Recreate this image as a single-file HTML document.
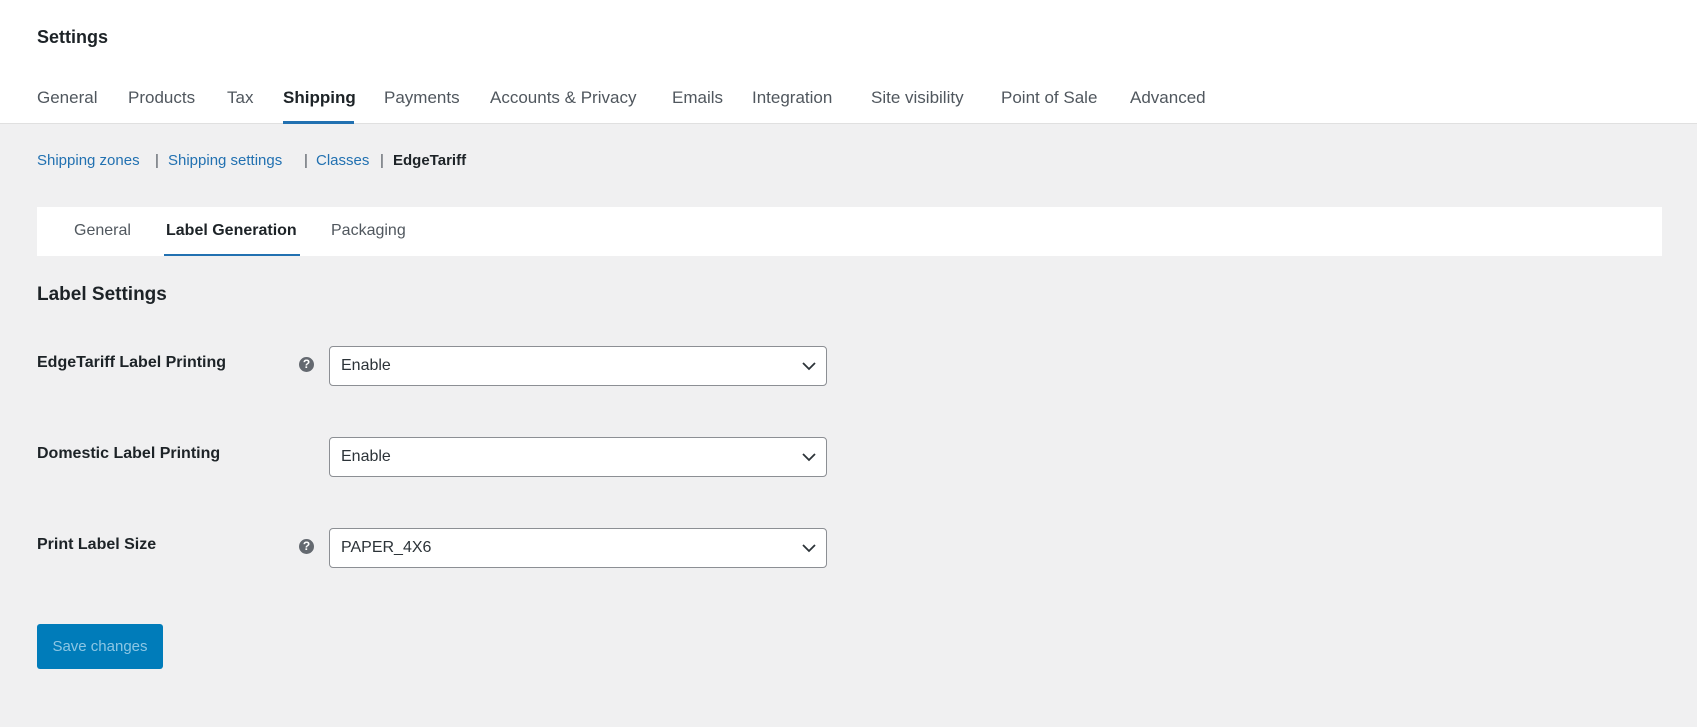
<!DOCTYPE html>
<html><head><style>
body{margin:0;width:1697px;height:727px;background:#f0f0f1;font-family:"Liberation Sans",sans-serif;color:#1d2327;position:relative;overflow:hidden}
.a{position:absolute;white-space:nowrap}
.hdr{position:absolute;left:0;top:0;width:1697px;height:123px;background:#fff;border-bottom:1px solid #e0e0e0}
.t{font-size:17px;color:#50575e;top:88px}
.s{font-size:15px;color:#2271b1;top:152px}
.p{font-size:15px;color:#50575e;top:152px}
.card{position:absolute;left:37px;top:207px;width:1625px;height:49px;background:#fff}
.it{font-size:16px;color:#50575e;top:222px}
.lab{font-size:16px;font-weight:bold;left:37px}
.sel{position:absolute;left:329px;width:498px;height:40px;background:#fff;border:1px solid #8c8f94;border-radius:4px;box-sizing:border-box;font-size:16px;padding:10px 11px;color:#2c3338}
.sel svg{position:absolute;right:10px;top:14px}
.q{position:absolute;left:299px;width:15px;height:15px;border-radius:50%;background:#646970;color:#fff;font-size:12px;font-weight:bold;text-align:center;line-height:15px}
</style></head><body>
<div class="hdr"></div>
<div class="a" style="left:37px;top:27px;font-size:18px;font-weight:bold">Settings</div>
<div class="a t" style="left:37px">General</div>
<div class="a t" style="left:128px">Products</div>
<div class="a t" style="left:227px">Tax</div>
<div class="a t" style="left:283px;color:#1d2327;font-weight:bold">Shipping</div>
<div class="a" style="left:283px;top:121px;width:71px;height:3px;background:#2271b1"></div>
<div class="a t" style="left:384px">Payments</div>
<div class="a t" style="left:490px">Accounts &amp; Privacy</div>
<div class="a t" style="left:672px">Emails</div>
<div class="a t" style="left:752px">Integration</div>
<div class="a t" style="left:871px">Site visibility</div>
<div class="a t" style="left:1001px">Point of Sale</div>
<div class="a t" style="left:1130px">Advanced</div>

<div class="a s" style="left:37px">Shipping zones</div>
<div class="a p" style="left:155px">|</div>
<div class="a s" style="left:168px">Shipping settings</div>
<div class="a p" style="left:304px">|</div>
<div class="a s" style="left:316px">Classes</div>
<div class="a p" style="left:380px">|</div>
<div class="a" style="left:393px;top:152px;font-size:15px;font-weight:bold">EdgeTariff</div>

<div class="card"></div>
<div class="a it" style="left:74px">General</div>
<div class="a it" style="left:166px;color:#1d2327;font-weight:bold">Label Generation</div>
<div class="a" style="left:164px;top:254px;width:136px;height:2px;background:#2271b1"></div>
<div class="a it" style="left:331px">Packaging</div>

<div class="a" style="left:37px;top:284px;font-size:19px;font-weight:bold">Label Settings</div>

<div class="a lab" style="top:354px">EdgeTariff Label Printing</div>
<div class="q" style="top:357px">?</div>
<div class="sel" style="top:346px">Enable<svg width="14" height="10"><path d="M1 2l6 6 6-6" stroke="#2c3338" stroke-width="1.8" fill="none"/></svg></div>

<div class="a lab" style="top:445px">Domestic Label Printing</div>
<div class="sel" style="top:437px">Enable<svg width="14" height="10"><path d="M1 2l6 6 6-6" stroke="#2c3338" stroke-width="1.8" fill="none"/></svg></div>

<div class="a lab" style="top:536px">Print Label Size</div>
<div class="q" style="top:539px">?</div>
<div class="sel" style="top:528px">PAPER_4X6<svg width="14" height="10"><path d="M1 2l6 6 6-6" stroke="#2c3338" stroke-width="1.8" fill="none"/></svg></div>

<div class="a" style="left:37px;top:624px;width:126px;height:45px;background:#007cba;border-radius:3px;color:#8cc6e4;font-size:15px;line-height:45px;text-align:center">Save changes</div>
</body></html>
